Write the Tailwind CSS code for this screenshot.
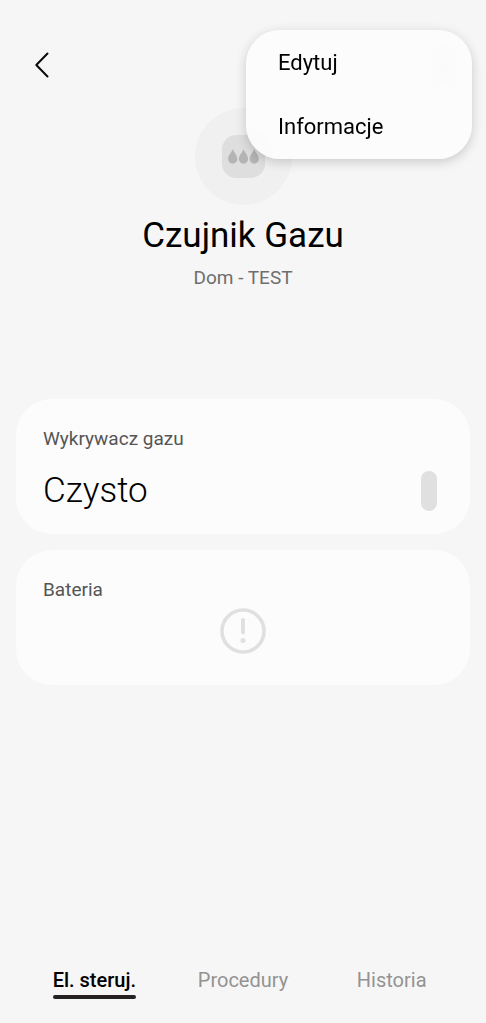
<!DOCTYPE html>
<html lang="pl">
<head>
<meta charset="utf-8">
<meta name="viewport" content="width=device-width, initial-scale=1">
<title>Czujnik Gazu</title>
<script src="https://cdn.jsdelivr.net/npm/@tailwindcss/browser@4"></script>
</head>
<body class="relative flex min-h-screen flex-col bg-[#f6f6f6] font-['Roboto',sans-serif] text-black">
  <header class="flex h-26 items-center justify-between px-6 pt-[26px]">
    <button type="button" aria-label="Wstecz" class="flex size-9 items-center justify-center">
      <svg class="h-7 w-5" viewBox="0 0 20 28" fill="none" stroke="#0a0a0a" stroke-width="2" stroke-linecap="round" stroke-linejoin="round"><path d="M15.500 2.500 4.300 14 15.500 25.500"/></svg>
    </button>
    <button type="button" aria-label="Więcej opcji" class="flex size-9 items-center justify-center">
      <svg class="h-7 w-2" viewBox="0 0 8 28" fill="#111"><circle cx="4" cy="4" r="3"/><circle cx="4" cy="14" r="3"/><circle cx="4" cy="24" r="3"/></svg>
    </button>
  </header>

  <main class="flex flex-1 flex-col">
    <section class="flex flex-col items-center pt-1">
      <div class="flex size-[97px] items-center justify-center rounded-full bg-[#f0f0f0]">
        <svg class="size-[43px]" viewBox="0 0 42 42" aria-hidden="true">
          <rect width="42" height="42" rx="14" fill="#dedede"/>
          <g fill="#b4b4b4">
            <path d="M10.500 14C9 17.500 6 20 6 23.500a4.500 4.500 0 0 0 9 0C15 20 12 17.500 10.500 14Z"/>
            <path d="M21 14C19.500 17.500 16.500 20 16.500 23.500a4.500 4.500 0 0 0 9 0C25.500 20 22.500 17.500 21 14Z"/>
            <path d="M31.500 14C30 17.500 27 20 27 23.500a4.500 4.500 0 0 0 9 0C36 20 33 17.500 31.500 14Z"/>
          </g>
        </svg>
      </div>
      <h1 class="mt-[7px] text-[35px] leading-12">Czujnik Gazu</h1>
      <p class="mt-[2px] text-[19px] leading-8 text-[#6e6e6e]">Dom - TEST</p>
    </section>

    <div class="mt-[105px] flex flex-col gap-4 px-4">
      <section class="h-[135px] rounded-[36px] bg-[#fcfcfc] px-[27px] pt-6">
        <h2 class="text-[19px] leading-8 text-[#555]">Wykrywacz gazu</h2>
        <div class="mt-3 flex items-center justify-between pr-[6px]">
          <p class="text-[35px] leading-12 font-light">Czysto</p>
          <span class="h-10 w-4 rounded-full bg-[#e0e0e0]"></span>
        </div>
      </section>
      <section class="h-[135px] rounded-[36px] bg-[#fcfcfc] px-[27px] pt-6">
        <h2 class="text-[19px] leading-8 text-[#555]">Bateria</h2>
        <svg class="mx-auto mt-[2px] size-[46px]" viewBox="0 0 46 46" fill="none" stroke="#e0e0e0" role="img" aria-label="Brak danych"><circle cx="23" cy="23" r="21" stroke-width="3.600"/><path d="M23 12V24.500" stroke-width="4" stroke-linecap="round"/><circle cx="23" cy="32.500" r="2.500" fill="#e0e0e0" stroke="none"/></svg>
      </section>
    </div>
  </main>

  <nav class="grid grid-cols-3 px-5 pb-6 text-[20px] leading-7 text-[#939393]">
    <a href="#sterowanie" aria-current="page" class="flex flex-col items-center font-medium text-black"><span class="flex flex-col">El. steruj.<span class="mt-px h-1 rounded-full bg-[#262222]"></span></span></a>
    <a href="#procedury" class="text-center">Procedury</a>
    <a href="#historia" class="text-center">Historia</a>
  </nav>

  <div role="menu" class="absolute top-[30px] right-[14px] flex w-[226px] flex-col rounded-[34px] bg-[#fcfcfc]/95 pb-px text-[22px] shadow-[0_3px_12px_rgba(0,0,0,0.18)] backdrop-blur-sm">
    <button type="button" role="menuitem" class="h-16 px-8 text-left">Edytuj</button>
    <button type="button" role="menuitem" class="h-16 px-8 text-left">Informacje</button>
  </div>
</body>
</html>
